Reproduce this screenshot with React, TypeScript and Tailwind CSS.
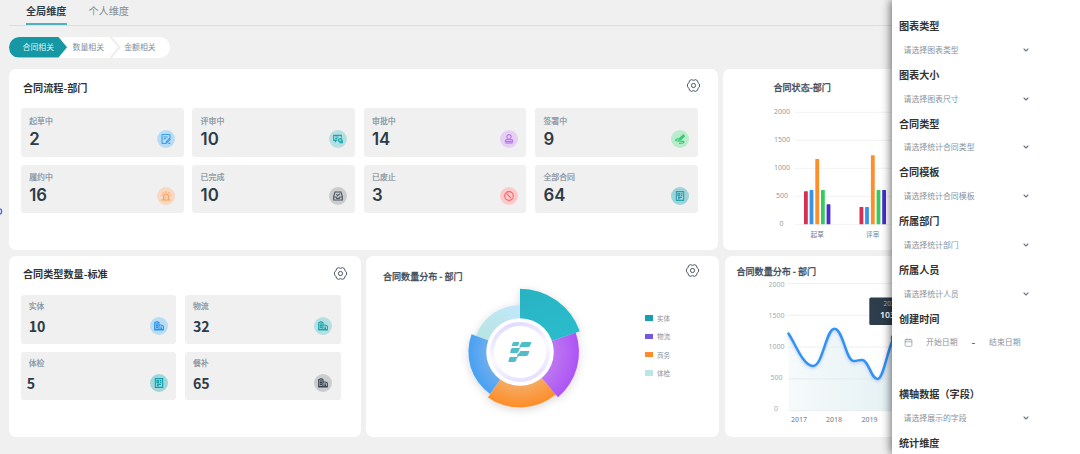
import type { ReactNode } from "react";
import clsx from "clsx";
import { Calendar, ChevronDown } from "lucide-react";

type Stat = {
  label: string;
  value: string;
  badge: string;
  icon: ReactNode;
  valueClass?: string;
};

const svgProps = {
  viewBox: "0 0 30 30",
  className: "w-[10px] h-[10px]",
  fill: "none",
  stroke: "currentColor",
  strokeWidth: 3.3,
};

const DraftIcon = () => (
  <svg {...svgProps}>
    <path d="M27 12V4a3 3 0 0 0-3-3H6a3 3 0 0 0-3 3v22a3 3 0 0 0 3 3h7" />
    <path d="M8 9h12M8 14h6M14 29l2-6L25 13l3 3L18 26zM22 28h6" />
  </svg>
);

const ReviewIcon = () => (
  <svg {...svgProps}>
    <path d="M13 19H2V4h23v7M7 9h10M7 14h6M8 20l-1 5" />
    <circle cx="22" cy="19" r="5.500" fill="currentColor" fillOpacity=".4" />
    <path d="M20 26h8v-6" />
  </svg>
);

const StampIcon = () => (
  <svg {...svgProps}>
    <path d="M12 17v-4c-6-4-3-11 3-11s9 7 3 11v4M4 23v-3c0-2 1-3 3-3h16c2 0 3 1 3 3v3z" />
    <path d="M4 27h22" strokeWidth="3.500" />
  </svg>
);

const SignIcon = () => (
  <svg {...svgProps} strokeWidth="3.600">
    <path d="M13 14L25 3l3 4-10 9-6 1z" fill="currentColor" />
    <path d="M11 14c-6 0-9 3-9 5 0 5 25 0 25 5 0 3-6 4-15 4" />
  </svg>
);

const SirenIcon = () => (
  <svg {...svgProps}>
    <path d="M8 26V16a7 7 0 0 1 14 0v10M1 27h28M15 5V1M7 7L5 4M23 7l2-3M4 13l-3-1M26 13l3-1M13 17v4" />
  </svg>
);

const InboxIcon = () => (
  <svg {...svgProps}>
    <path d="M2 17L6 3h18l4 14v10H2zM2 18h7l2 4h8l2-4h7M10 10l4 4 7-6" />
  </svg>
);

const BanIcon = () => (
  <svg {...svgProps}>
    <circle cx="15" cy="15" r="13" />
    <path d="M8 8l14 14" />
  </svg>
);

const DocIcon = () => (
  <svg {...svgProps}>
    <path d="M4 2h22v26H4zM9 8h5v6H9zM18 8h4M18 13h4M9 19h12M9 23h5" />
  </svg>
);

const BuildingIcon = () => (
  <svg {...svgProps}>
    <path d="M2 5l7-3 6 3v21H2zM15 12h7l6 3v11H15M6 9h6M6 14h6M6 19h6M19 18h5M19 22h5M1 27h28" />
    <path d="M3 6h11v20H3z" fill="currentColor" fillOpacity=".35" stroke="none" />
  </svg>
);

const GearIcon = () => (
  <svg viewBox="0 0 39 39" className="w-[13px] h-[13px] text-[#4a5663]" fill="none" stroke="currentColor" strokeWidth="3" strokeLinejoin="round">
    <path d="M13 2q6.500 4 13 0l5.500 3.200q.5 7 6 10.300v8q-5.500 3.300-6 10.300l-5.500 3.200q-6.500-4-13 0l-5.500-3.200q-.5-7-6-10.300v-8q5.500-3.300 6-10.300z" />
    <circle cx="19.500" cy="19.500" r="6.300" />
  </svg>
);

const flowStats: Stat[] = [
  { label: "起草中", value: "2", badge: "bg-[#b8dcf3] text-[#3a9ff0]", icon: <DraftIcon /> },
  { label: "评审中", value: "10", badge: "bg-[#b6dfe1] text-[#1ba5b0]", icon: <ReviewIcon /> },
  { label: "审批中", value: "14", badge: "bg-[#e5d0f3] text-[#bd74ed]", icon: <StampIcon /> },
  { label: "签署中", value: "9", badge: "bg-[#b9ebcd] text-[#35cc70]", icon: <SignIcon /> },
  { label: "履约中", value: "16", badge: "bg-[#f8d8c0] text-[#ff9a50]", icon: <SirenIcon /> },
  { label: "已完成", value: "10", badge: "bg-[#cbcccd] text-[#4b5662]", icon: <InboxIcon /> },
  { label: "已废止", value: "3", badge: "bg-[#fbcacb] text-[#fb6268]", icon: <BanIcon /> },
  { label: "全部合同", value: "64", badge: "bg-[#9fd3d9] text-[#2ba3ae]", icon: <DocIcon /> },
];

const typeStats: Stat[] = [
  { label: "实体", value: "10", badge: "bg-[#b8dcf3] text-[#2c93ef]", icon: <BuildingIcon /> },
  { label: "物流", value: "32", badge: "bg-[#b6dfe1] text-[#1ba5b0]", icon: <BuildingIcon /> },
  { label: "体检", value: "5", badge: "bg-[#9fd6da] text-[#12a0ac]", icon: <DocIcon />, valueClass: "-ml-[2px]" },
  { label: "餐补", value: "65", badge: "bg-[#cbcccd] text-[#3a4552]", icon: <BuildingIcon /> },
];

function StatTile({ stat, inter }: { stat: Stat; inter?: boolean }) {
  return (
    <div className="flex items-end justify-between h-[48.500px] rounded-[3px] bg-[#f0f0f0] pl-2 pr-[8.500px] pb-[8.500px]">
      <div className="flex flex-col self-start">
        <span
          className={clsx(
            "text-[7.900px] leading-[10px] text-[#84919d] [-webkit-text-stroke:0.2px_#84919d]",
            inter ? "mt-[7.500px] ml-[0.500px]" : "mt-[6px]"
          )}
        >
          {stat.label}
        </span>
        <span
          className={clsx(
            "text-[#2d3b48]",
            inter
              ? "mt-[4px] ml-[0.500px] font-['Inter'] font-semibold text-[16.800px] leading-[18px]"
              : "mt-[6px] font-bold text-[14.200px] leading-[18px]",
            stat.valueClass
          )}
        >
          {stat.value}
        </span>
      </div>
      <span className={clsx("flex items-center justify-center w-[18px] h-[18px] rounded-full", stat.badge)}>{stat.icon}</span>
    </div>
  );
}

const bars = [
  { x: 81, y: 122.3, fill: "#d82f50" },
  { x: 86.6, y: 121, fill: "#3994e8" },
  { x: 92.3, y: 90, fill: "#ff8d28" },
  { x: 98, y: 121, fill: "#37cb5d" },
  { x: 103.6, y: 135.2, fill: "#4a2bcd" },
  { x: 136.5, y: 138, fill: "#d82f50" },
  { x: 142.1, y: 138, fill: "#3994e8" },
  { x: 147.9, y: 86.2, fill: "#ff8d28" },
  { x: 153.6, y: 121, fill: "#37cb5d" },
  { x: 159.2, y: 121, fill: "#4a2bcd" },
];

const ticks = ["2000", "1500", "1000", "500", "0"];

function BarChart() {
  return (
    <svg width="280" height="181" className="shrink-0 block">
      <text x="50.500" y="22.300" fontSize="9.050" fill="#3b4855" stroke="#3b4855" strokeWidth=".3">合同状态-部门</text>
      {ticks.map((t, i) => (
        <g key={t}>
          <path d={`M72 ${43.3 + i * 28}H280`} stroke="#f1f2f3" strokeWidth="1" />
          <text x={i === 4 ? 58.5 : 59} y={45.2 + i * 28} fontSize="7" textAnchor="middle" fill="#929ca6" fontFamily="Noto Sans">{t}</text>
        </g>
      ))}
      {bars.map((b) => (
        <rect key={b.x} x={b.x} y={b.y} width="3.800" height={155.2 - b.y} rx=".5" fill={b.fill} />
      ))}
      <g fontSize="6.600" textAnchor="middle" fill="#71808e">
        <text x="94.200" y="168">起草</text>
        <text x="149.700" y="168">评审</text>
      </g>
    </svg>
  );
}

const curve = "M63.500 77.500C70 87 78 110 88 110C98 110 101 72.700 109.500 72.700C118 72.700 121 105 128.500 105C133 105 134.500 103.500 137.500 104C144 105 146 123 152.500 123C158 123 161 100 168 83";

function LineChart() {
  return (
    <svg width="280" height="181" className="shrink-0 block">
      <defs>
        <linearGradient id="area" x1="0" x2="1" y1="0" y2="0">
          <stop offset="0" stopColor="#f6fafb" />
          <stop offset="1" stopColor="#e5f1f4" />
        </linearGradient>
        <filter id="glow" x="-20%" y="-20%" width="140%" height="150%">
          <feDropShadow dx="0" dy="1.500" stdDeviation="1.500" floodColor="#5a7dff" floodOpacity=".35" />
        </filter>
      </defs>
      <text x="11.500" y="19.300" fontSize="9.050" fill="#3b4855" stroke="#3b4855" strokeWidth=".3">合同数量分布 - 部门</text>
      <path d={`${curve}V154.500H63.500Z`} fill="url(#area)" />
      {ticks.map((t, i) => (
        <g key={t}>
          <path d={`M63 ${27.5 + i * 31.800}H280`} stroke="#dfe8ea" strokeOpacity=".6" strokeWidth="1" />
          <text x={i === 4 ? 51 : 51.5} y={30.600 + i * 31.200} fontSize="7" textAnchor="middle" fill="#a3abb5" fontFamily="Noto Sans">{t}</text>
        </g>
      ))}
      <path d={curve} fill="none" stroke="#3392f3" strokeWidth="2.500" strokeLinecap="round" filter="url(#glow)" />
      <g fontSize="7" fontWeight="500" fill="#84909c" textAnchor="middle" fontFamily="Noto Sans">
        <text x="74" y="166.300">2017</text>
        <text x="109" y="166.300">2018</text>
        <text x="144.500" y="166.300">2019</text>
      </g>
      <circle cx="169" cy="82" r="3.300" fill="#12a48e" />
      <rect x="144.300" y="41.500" width="52" height="27.500" rx="1.500" fill="#2e3d4b" />
      <text x="158.500" y="49.800" fontSize="6.600" fill="#a9b3bc" fontFamily="Noto Sans">2020</text>
      <text x="155" y="62.200" fontSize="8.800" fontWeight="600" fill="#fff" fontFamily="Noto Sans">1032</text>
    </svg>
  );
}

const legend = [
  { name: "实体", color: "bg-[#189ead]" },
  { name: "物流", color: "bg-[#7558e0]" },
  { name: "商务", color: "bg-[#ff8c2a]" },
  { name: "体检", color: "bg-[#bce5e9]" },
];

// angles are clockwise from twelve o'clock
const slices = [
  { from: 290, to: 360, r: 47, fill: "url(#sky)" },
  { from: 215.3, to: 290, r: 51.6, fill: "url(#blue)" },
  { from: 140, to: 215.3, r: 55.6, fill: "url(#orange)" },
  { from: 70.8, to: 140, r: 59, fill: "url(#purple)" },
  { from: 0, to: 70.8, r: 63.300, fill: "url(#teal)" },
];

function slicePath(from: number, to: number, r: number) {
  const point = (deg: number) => {
    const a = (deg * Math.PI) / 180;
    return `${(r * Math.sin(a)).toFixed(2)} ${(-r * Math.cos(a)).toFixed(2)}`;
  };
  return `M0 0L${point(from)}A${r} ${r} 0 0 1 ${point(to)}Z`;
}

function RoseChart() {
  return (
    <svg width="160" height="150" viewBox="-80 -75 160 150" className="shrink-0">
      <defs>
        <linearGradient id="teal" x1="0" y1="0" x2=".5" y2="1">
          <stop offset="0" stopColor="#28b3c3" />
          <stop offset="1" stopColor="#2bbdcd" />
        </linearGradient>
        <radialGradient id="purple" gradientUnits="userSpaceOnUse" cx="0" cy="0" r="59">
          <stop offset=".5" stopColor="#c07bf0" />
          <stop offset="1" stopColor="#ad55f5" />
        </radialGradient>
        <radialGradient id="orange" gradientUnits="userSpaceOnUse" cx="0" cy="0" r="56">
          <stop offset=".5" stopColor="#f2b271" />
          <stop offset="1" stopColor="#ff8c27" />
        </radialGradient>
        <radialGradient id="blue" gradientUnits="userSpaceOnUse" cx="0" cy="0" r="52">
          <stop offset=".6" stopColor="#72afec" />
          <stop offset="1" stopColor="#46a0f5" />
        </radialGradient>
        <linearGradient id="sky" x1="1" y1="0" x2=".2" y2="1">
          <stop offset="0" stopColor="#c2e7fb" />
          <stop offset="1" stopColor="#b6e4df" />
        </linearGradient>
        <linearGradient id="ring" x1=".35" y1="0" x2=".65" y2="1">
          <stop offset="0" stopColor="#e2dbff" />
          <stop offset=".5" stopColor="#faf9ff" />
          <stop offset="1" stopColor="#e6e0ff" />
        </linearGradient>
        <filter id="soft" x="-30%" y="-30%" width="160%" height="160%">
          <feDropShadow dx="0" dy="2" stdDeviation="4" floodColor="#000" floodOpacity=".16" />
        </filter>
      </defs>
      <g filter="url(#soft)">
        {slices.map((s) => (
          <path key={s.from} d={slicePath(s.from, s.to, s.r)} fill={s.fill} />
        ))}
      </g>
      <circle r="33.800" fill="#fff" />
      <circle r="28" fill="none" stroke="url(#ring)" strokeWidth="4" />
      <g fill="#50bec9">
        <path d="M-6.500-10H-.5L-2-6H-8.300Q-7.600-9.500-6.500-10z" />
        <path d="M2.500-10H11.500L10-6Q9.500-5 8-5H0Q.6-9.500 2.500-10z" />
        <path d="M-8-4H0L-1.700 0Q-2.200 1-3.500 1H-9.900Q-9.200-3.500-8-4z" />
        <path d="M.8-1H9.500L8 3Q7.500 4 6 4H-1.500Q-.8-.6 .8-1z" />
        <path d="M-9.700 5H-2.700L-4.200 9Q-4.600 10-6 10H-11.700Q-11 5.500-9.700 5z" />
        <path d="M-.5-6.500L1.500-8V-6L-.2-3.500zM-2.500 2L-.5 1V3.500L-3 6z" />
      </g>
    </svg>
  );
}

const filters = [
  { title: "图表类型", hint: "请选择图表类型" },
  { title: "图表大小", hint: "请选择图表尺寸" },
  { title: "合同类型", hint: "请选择统计合同类型" },
  { title: "合同模板", hint: "请选择统计合同模板" },
  { title: "所属部门", hint: "请选择统计部门" },
  { title: "所属人员", hint: "请选择统计人员" },
];

function FilterTitle({ children }: { children: ReactNode }) {
  return <h3 className="text-[10.150px] leading-[14px] font-bold text-[#333]">{children}</h3>;
}

function FilterSelect({ title, hint }: { title: string; hint: string }) {
  return (
    <div className="h-[48.750px] shrink-0">
      <FilterTitle>{title}</FilterTitle>
      <div className="mt-[10.800px] ml-[4.500px] flex h-3 w-[126px] items-center justify-between text-[7.900px] leading-3 text-[#8694a2]">
        <span>{hint}</span>
        <ChevronDown className="w-[8px] h-[8px] text-[#6b7783]" strokeWidth={3.300} />
      </div>
    </div>
  );
}

function FilterDrawer() {
  return (
    <aside className="relative z-10 flex flex-col w-[188px] shrink-0 bg-white pl-[7px] pt-[19.200px] shadow-[-1px_0_9px_rgba(0,0,0,0.6)]">
      {filters.map((f) => (
        <FilterSelect key={f.title} {...f} />
      ))}
      <div className="h-[75.500px] shrink-0">
        <FilterTitle>创建时间</FilterTitle>
        <div className="mt-[10.500px] ml-[5px] flex h-3 items-center text-[7.900px] leading-3 text-[#8694a2]">
          <Calendar className="w-[9px] h-[9px] mr-[13px]" strokeWidth={1.800} />
          <span>开始日期</span>
          <span className="w-[31.500px] text-center text-[10px] font-bold text-[#5b6773]">-</span>
          <span>结束日期</span>
        </div>
      </div>
      <FilterSelect title="横轴数据（字段）" hint="请选择展示的字段" />
      <FilterTitle>统计维度</FilterTitle>
    </aside>
  );
}

function Steps() {
  return (
    <div className="relative mt-[11.500px] ml-[9px] flex h-[20.500px] w-[161px] shrink-0 items-center overflow-hidden rounded-full bg-white text-[7.900px] leading-none text-[#8290a0]">
      <svg width="161" height="20.500" viewBox="0 0 161 20.500" className="absolute inset-0">
        <path d="M0 0H49.500L58 10.250L49.500 20.500H0z" fill="#1597a4" />
        <path d="M101.500 -.5L110.500 10.250L101.500 21" fill="none" stroke="#efefef" strokeWidth="2.200" />
      </svg>
      <span className="relative ml-[13.500px] text-[#d5f3f5]">合同相关</span>
      <span className="relative ml-[18.500px]">数量相关</span>
      <span className="relative ml-[20px]">金额相关</span>
    </div>
  );
}

export default function App() {
  return (
    <div className="relative flex w-[1080px] h-[454px] overflow-hidden bg-[#f0f0f0] font-['Noto_Sans_CJK_SC',sans-serif]">
      <svg width="3" height="9" viewBox="0 0 3 9" className="absolute left-0 top-[207px]">
        <circle cx="-.8" cy="4.500" r="2.500" fill="none" stroke="#4a6be8" strokeWidth="1.400" />
      </svg>
      <main className="flex flex-col w-[892px] shrink-0 overflow-hidden">
        <nav className="ml-[9px] flex h-[25.500px] shrink-0 items-end border-b border-[#dcdddd] pl-[17px] text-[10.150px] leading-[14px]">
          <span className="h-[20.500px] border-b-2 border-[#4fb3bd] font-bold text-[#2d3b4a]">全局维度</span>
          <span className="ml-[22px] h-[20.500px] text-[#858b91]">个人维度</span>
        </nav>
        <Steps />

        <div className="mt-[11.500px] flex h-[181px] shrink-0 gap-[5.500px] pl-[9px]">
          <section className="w-[708.500px] shrink-0 rounded-[7px] bg-white">
            <header className="flex h-[39px] items-start justify-between pl-[14px] pr-[17.500px] pt-[10px]">
              <h2 className="mt-[2px] text-[10.150px] leading-[14px] font-bold text-[#333]">合同流程-部门</h2>
              <GearIcon />
            </header>
            <div className="grid grid-cols-4 gap-x-[8.500px] gap-y-[8.300px] pl-[11.700px] pr-[19.700px]">
              {flowStats.map((s) => (
                <StatTile key={s.label} stat={s} inter />
              ))}
            </div>
          </section>
          <section className="w-[280px] shrink-0 rounded-[7px] bg-white">
            <BarChart />
          </section>
        </div>

        <div className="mt-[6px] flex h-[181px] shrink-0 pl-[9px]">
          <section className="w-[351.500px] shrink-0 rounded-[7px] bg-white">
            <header className="flex h-[39px] items-start justify-between pl-[14px] pr-[13.500px] pt-[10.500px]">
              <h2 className="text-[10.150px] leading-[14px] font-bold text-[#333]">合同类型数量-标准</h2>
              <GearIcon />
            </header>
            <div className="grid grid-cols-2 gap-x-[8.500px] gap-y-[8.300px] pl-[11.700px] pr-[19.900px]">
              {typeStats.map((s) => (
                <StatTile key={s.label} stat={s} />
              ))}
            </div>
          </section>
          <section className="ml-[5.500px] flex w-[353px] shrink-0 flex-col rounded-[7px] bg-white">
            <header className="flex h-[21px] items-start justify-between pl-[17px] pr-[20px] pt-[7.500px]">
              <h2 className="mt-[7px] text-[9.050px] leading-[12px] text-[#3b4855] [-webkit-text-stroke:0.3px_#3b4855]">合同数量分布 - 部门</h2>
              <GearIcon />
            </header>
            <div className="flex">
              <div className="pl-[74.300px]">
                <RoseChart />
              </div>
              <ul className="ml-[44.700px] mt-[36px] flex flex-col gap-[8.300px] text-[6.600px] leading-[10px] text-[#8794a2]">
                {legend.map((l) => (
                  <li key={l.name} className="flex items-center gap-[4px]">
                    <i className={clsx("h-[5.500px] w-[8px]", l.color)} />
                    {l.name}
                  </li>
                ))}
              </ul>
            </div>
          </section>
          <section className="ml-[6px] w-[280px] shrink-0 rounded-[7px] bg-white">
            <LineChart />
          </section>
        </div>
      </main>
      <FilterDrawer />
    </div>
  );
}
